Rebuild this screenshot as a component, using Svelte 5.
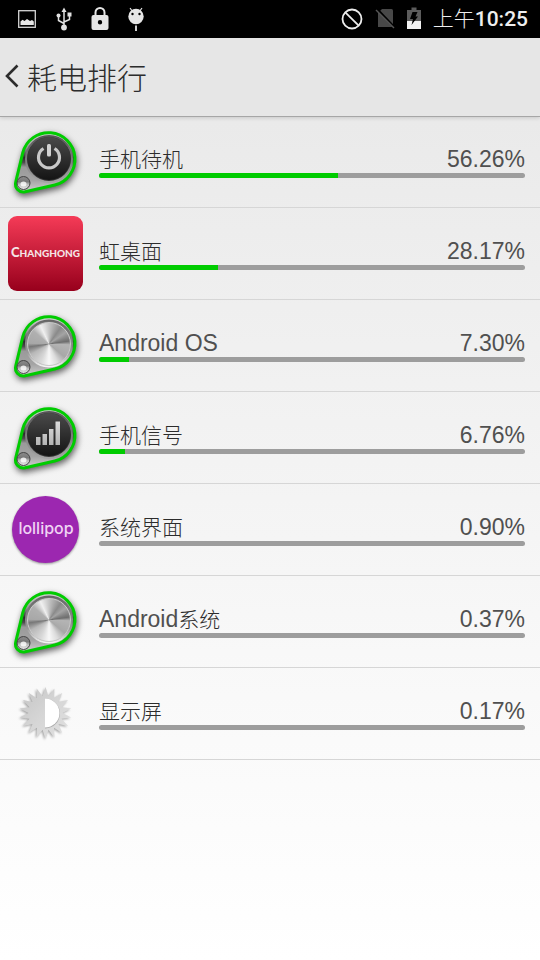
<script>
  const items = [
    { icon: 'power', name: '手机待机', percent: 56.26 },
    { icon: 'changhong', name: '虹桌面', percent: 28.17 },
    { icon: 'metal', latin: 'Android OS', name: '', percent: 7.3 },
    { icon: 'signal', name: '手机信号', percent: 6.76 },
    { icon: 'lollipop', name: '系统界面', percent: 0.9 },
    { icon: 'metal', latin: 'Android', name: '系统', percent: 0.37 },
    { icon: 'display', name: '显示屏', percent: 0.17 }
  ];

  const pinIcons = ['power', 'signal', 'metal'];

  function starPoints(cx, cy, outer, inner, count) {
    const points = [];
    for (let i = 0; i < count * 2; i++) {
      const r = i % 2 === 0 ? outer : inner;
      const a = (Math.PI * i) / count - Math.PI / 2;
      points.push((cx + r * Math.cos(a)).toFixed(2) + ',' + (cy + r * Math.sin(a)).toFixed(2));
    }
    return points.join(' ');
  }

  const sunPoints = starPoints(37.5, 37, 26, 17, 18);
</script>

<svg class="defs" width="0" height="0" aria-hidden="true">
  <defs>
    <linearGradient id="plate" x1="0" y1="0" x2="0" y2="1">
      <stop offset="0" stop-color="#d8d8d8" />
      <stop offset="0.25" stop-color="#969696" />
      <stop offset="0.42" stop-color="#2c2c2c" />
      <stop offset="0.5" stop-color="#4c4c4c" />
      <stop offset="0.58" stop-color="#9a9a9a" />
      <stop offset="0.8" stop-color="#a4a4a4" />
      <stop offset="1" stop-color="#d0d0d0" />
    </linearGradient>
    <linearGradient id="rim" x1="0" y1="0" x2="0" y2="1">
      <stop offset="0" stop-color="#666" />
      <stop offset="0.7" stop-color="#999" />
      <stop offset="1" stop-color="#f4f4f4" />
    </linearGradient>
    <linearGradient id="dark-rim" x1="0" y1="0" x2="0" y2="1">
      <stop offset="0" stop-color="#555" />
      <stop offset="1" stop-color="#a4a4a4" />
    </linearGradient>
    <linearGradient id="dark" x1="0" y1="0" x2="0" y2="1">
      <stop offset="0" stop-color="#4a4a4a" />
      <stop offset="1" stop-color="#141414" />
    </linearGradient>
    <linearGradient id="glyph" x1="0" y1="0" x2="0" y2="1">
      <stop offset="0" stop-color="#dcdcdc" />
      <stop offset="1" stop-color="#b4b4b4" />
    </linearGradient>
    <linearGradient id="screw" x1="0" y1="0" x2="0" y2="1">
      <stop offset="0" stop-color="#8c8c8c" />
      <stop offset="0.4" stop-color="#777" />
      <stop offset="0.6" stop-color="#bbb" />
      <stop offset="1" stop-color="#e8e8e8" />
    </linearGradient>
    <linearGradient id="red" x1="0" y1="0" x2="0" y2="1">
      <stop offset="0" stop-color="#f53b57" />
      <stop offset="1" stop-color="#97001c" />
    </linearGradient>
    <linearGradient id="sun" x1="0" y1="0" x2="1" y2="1">
      <stop offset="0" stop-color="#c4c4c4" />
      <stop offset="0.5" stop-color="#d6d6d6" />
      <stop offset="1" stop-color="#e2e2e2" />
    </linearGradient>
  </defs>
</svg>

<div class="screen">
  <div class="status">
    <div class="status-group left">
      <svg width="20" height="26" viewBox="0 0 20 26" aria-hidden="true">
        <rect x="1.7" y="4.7" width="16.6" height="16.6" fill="none" stroke="#d6d6d6" stroke-width="1.3" />
        <path d="M3.5 19v-3.500l2-1.800 2 1.200 2.500-2 3 2 2-1 1.800 1.600V19z" fill="#e6e6e6" />
      </svg>
      <svg width="18" height="26" viewBox="0 0 18 26" aria-hidden="true">
        <path d="M9 5v16M9 17.500L3.500 14.500V9M9 16l5.500-2.500V8" fill="none" stroke="#e2e2e2" stroke-width="1.5" />
        <path d="M9 1.500L11.500 6h-5z" fill="#e2e2e2" />
        <circle cx="9" cy="21.500" r="2.900" fill="#e2e2e2" />
        <circle cx="3.500" cy="9.500" r="2" fill="#e2e2e2" />
        <rect x="12.500" y="6.500" width="4" height="4" fill="#e2e2e2" />
      </svg>
      <svg width="18" height="26" viewBox="0 0 18 26" aria-hidden="true">
        <path d="M4.500 10V6.500a4.500 4.500 0 0 1 9 0V10" fill="none" stroke="#e6e6e6" stroke-width="2" />
        <path fill-rule="evenodd" d="M2.500 9h13a2 2 0 0 1 2 2v11a2 2 0 0 1-2 2h-13a2 2 0 0 1-2-2V11a2 2 0 0 1 2-2zM9 14a2.200 2.200 0 1 0 0 4.400 2.200 2.200 0 0 0 0-4.400z" fill="#e6e6e6" />
      </svg>
      <svg width="18" height="26" viewBox="0 0 18 26" aria-hidden="true">
        <circle cx="9" cy="10.500" r="7.700" fill="#e6e6e6" />
        <path d="M3 2l2.500 3.500M15 2l-2.500 3.500" stroke="#e6e6e6" stroke-width="1.2" />
        <path d="M9 19.500V25" stroke="#d0d0d0" stroke-width="2" />
        <circle cx="5.500" cy="8" r="1.200" fill="#000" />
        <circle cx="12.500" cy="8" r="1.200" fill="#000" />
      </svg>
    </div>
    <div class="status-group right">
      <svg width="22" height="26" viewBox="0 0 22 26" aria-hidden="true">
        <circle cx="11" cy="13" r="9.500" fill="none" stroke="#eee" stroke-width="1.800" />
        <path d="M4.300 6.300l13.400 13.400" stroke="#eee" stroke-width="1.800" />
      </svg>
      <svg width="20" height="26" viewBox="0 0 20 26" aria-hidden="true">
        <path d="M7 3h9.500a1.500 1.500 0 0 1 1.500 1.500V21H3V7z" fill="#484848" />
        <path d="M2.500 3.500L20 22" stroke="#000" stroke-width="2.500" />
        <path d="M1 4l18 18" stroke="#555" stroke-width="1.500" />
      </svg>
      <svg width="14" height="26" viewBox="0 0 14 26" aria-hidden="true">
        <path d="M4.500 1.500h5V4H14v11H0V4h4.500z" fill="#5c5c5c" />
        <path d="M0 15h14v8H0z" fill="#f2f2f2" />
        <path d="M5.500 6h5L8.500 10.500H11L4.500 19l1.500-6H3z" fill="#000" />
      </svg>
      <span class="clock">上午<b>10:25</b></span>
    </div>
  </div>

  <header>
    <button class="back" type="button">
      <svg width="14" height="24" viewBox="0 0 14 24" aria-hidden="true">
        <path d="M12.500 1.500L2 12l10.500 10.500" fill="none" stroke="#2c2c2c" stroke-width="2.600" />
      </svg>
      <span>耗电排行</span>
    </button>
  </header>

  <ul>
    {#each items as item}
      <li>
        <svg class="icon" viewBox="0 0 75 75" aria-hidden="true">
          {#if pinIcons.includes(item.icon)}
            <path class="pin" d="M7.700 58.100L14.800 28.700A26.500 26.500 0 1 1 46.800 61L17.200 67.800A8 8 0 0 1 7.700 58.100z" fill="url(#plate)" stroke="#0c0" stroke-width="3" />
            {#if item.icon === 'metal'}
              <circle cx="41" cy="35.500" r="23" fill="#777" stroke="url(#rim)" stroke-width="2" />
              <foreignObject x="19" y="13.500" width="44" height="44">
                <div class="disc"></div>
              </foreignObject>
            {:else}
              <circle cx="41" cy="35" r="23" fill="#333" stroke="url(#dark-rim)" stroke-width="2" />
              <circle cx="41" cy="34.500" r="21.500" fill="url(#dark)" />
            {/if}
            {#if item.icon === 'power'}
              <path d="M35.500 24.500a10.500 10.500 0 1 0 11 0" fill="none" stroke="#c8c8c8" stroke-width="3.200" />
              <rect x="39" y="20" width="4" height="12.500" rx="1.500" fill="#d2d2d2" />
            {:else if item.icon === 'signal'}
              <path d="M28 45v-8h4.500v8zM34.500 45V34H39v11zM41 45V29h4.500v16zM47.500 45V21.500H52V45z" fill="url(#glyph)" />
            {/if}
            <circle cx="15.500" cy="59" r="6.500" fill="url(#screw)" stroke="#444" />
            <ellipse cx="15.500" cy="60" rx="3" ry="2.500" fill="#fff" opacity="0.8" />
          {:else if item.icon === 'changhong'}
            <rect width="75" height="75" rx="9" fill="url(#red)" />
            <text class="brand" x="37.500" y="41" text-anchor="middle"><tspan class="brand-cap">C</tspan>HANGHONG</text>
          {:else if item.icon === 'lollipop'}
            <circle class="ball" cx="37.500" cy="37.500" r="33.500" fill="#9c27b0" />
            <text class="lolli" x="38" y="42" text-anchor="middle">lollipop</text>
          {:else}
            <polygon class="sun" points={sunPoints} fill="url(#sun)" />
            <path d="M37 22.500a15 15 0 0 1 0 30" fill="#aaa" />
            <path d="M37 22.500a14.500 14.500 0 0 1 0 29z" fill="#fff" />
          {/if}
        </svg>
        <div class="info">
          <div class="line">
            <span class="name">{#if item.latin}<span class="latin">{item.latin}</span>{/if}{item.name}</span>
            <span class="percent">{item.percent.toFixed(2)}%</span>
          </div>
          <div class="bar" role="progressbar" aria-label={(item.latin || '') + item.name} aria-valuenow={item.percent}>
            <div class="fill" style="width: {Math.floor(item.percent)}%"></div>
          </div>
        </div>
      </li>
    {/each}
  </ul>
</div>

<style>
  :global(body) {
    margin: 0;
    background: #fff;
  }

  .screen {
    min-height: 100vh;
    background: linear-gradient(#e6e6e6, #ebebeb 16%, #f8f8f8 68%, #fff);
    color: #2c2c2c;
    font-family: 'Inter', 'Noto Sans CJK SC', sans-serif;
    font-weight: 300;
  }

  .defs {
    position: absolute;
  }

  .status {
    display: flex;
    justify-content: space-between;
    align-items: center;
    height: 38px;
    padding: 0 12px 0 17px;
    background: #000;
    color: #eee;
  }

  .status-group {
    display: flex;
    align-items: center;
    gap: 18px;
  }

  .right {
    gap: 12px;
  }

  .clock {
    font-family: 'Roboto', 'Noto Sans CJK SC', sans-serif;
    font-size: 21px;
    line-height: 26px;
  }

  .clock b {
    font-weight: 500;
  }

  header {
    position: relative;
    background: #e6e6e6;
    border-bottom: 1px solid #a6a6a6;
    box-shadow: 0 1px 4px rgba(0, 0, 0, 0.15);
  }

  .back {
    display: flex;
    align-items: center;
    gap: 8px;
    height: 78px;
    padding: 0 5px 2px;
    border: 0;
    background: none;
    color: #2c2c2c;
    font: inherit;
    font-size: 30px;
  }

  ul {
    margin: -1px 0 0;
    padding: 0;
    list-style: none;
  }

  li {
    display: flex;
    gap: 16px;
    padding: 8px 15px 8px 8px;
    border-bottom: 1px solid #d6d6d6;
  }

  .icon {
    flex: none;
    width: 75px;
    height: 75px;
    overflow: visible;
  }

  .info {
    flex: 1;
    padding-top: 22px;
  }

  .line {
    display: flex;
    justify-content: space-between;
    height: 27px;
    line-height: 27px;
  }

  .name {
    font-size: 21px;
  }

  .latin,
  .percent {
    color: #505050;
    font-family: 'Liberation Sans', sans-serif;
    font-size: 23px;
  }

  .bar {
    height: 5px;
    border-radius: 3px;
    background: #9d9d9d;
    overflow: hidden;
  }

  .fill {
    height: 100%;
    background: #0c0;
  }

  .pin {
    filter: drop-shadow(1px 3px 3px rgba(0, 0, 0, 0.6));
  }

  .disc {
    box-sizing: border-box;
    width: 44px;
    height: 44px;
    border: 1px solid #ccc;
    border-radius: 50%;
    background: conic-gradient(#c4c4c4, #8a8a8a 35deg, #a4a4a4 55deg, #6e6e6e 82deg, #b4b4b4 92deg, #a8a8a8 130deg, #dcdcdc 155deg, #f8f8f8 180deg, #d8d8d8 205deg, #b8b8b8 240deg, #777 262deg, #a8a8a8 272deg, #b0b0b0 310deg, #f0f0f0 335deg, #c4c4c4);
  }

  .brand {
    fill: #f4e4e6;
    font-family: 'Lato', sans-serif;
    font-size: 10px;
    font-weight: 900;
  }

  .brand-cap {
    font-size: 13px;
  }

  .ball {
    filter: drop-shadow(0 1px 1px rgba(0, 0, 0, 0.4));
  }

  .lolli {
    fill: #f0d4f4;
    font-size: 16px;
    font-weight: 500;
  }

  .sun {
    filter: drop-shadow(-1px 1px 1px rgba(0, 0, 0, 0.35));
  }
</style>
